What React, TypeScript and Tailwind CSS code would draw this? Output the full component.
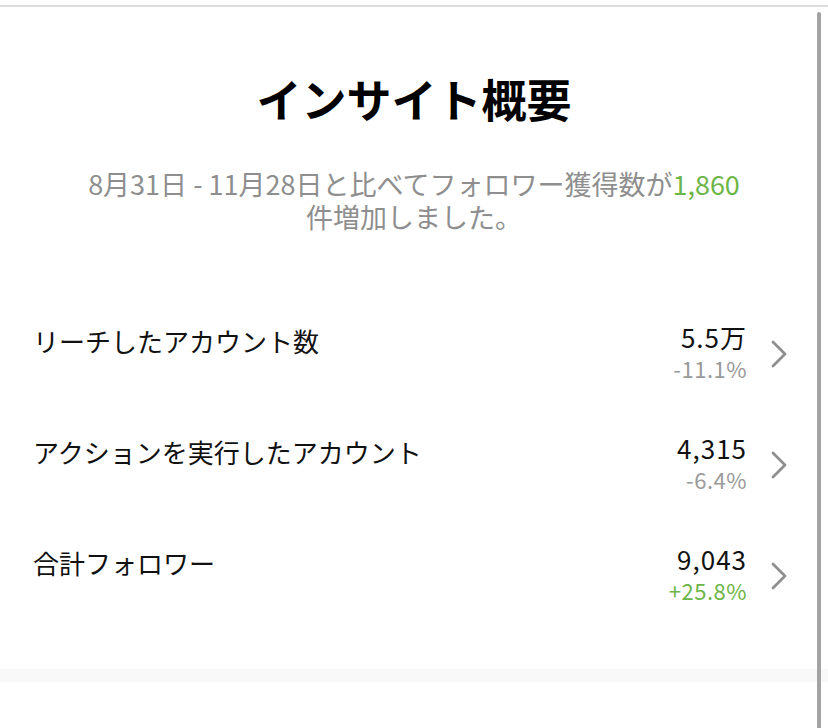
const rows = [
  { label: "リーチしたアカウント数", value: "5.5万", change: "-11.1%", up: false },
  { label: "アクションを実行したアカウント", value: "4,315", change: "-6.4%", up: false },
  { label: "合計フォロワー", value: "9,043", change: "+25.8%", up: true },
];

const Chevron = () => (
  <svg width="18" height="28" viewBox="0 0 18 28" className="ml-[24px] mt-[17px] shrink-0">
    <polyline points="3,2 15,14 3,26" fill="none" stroke="#8e8e8e" strokeWidth="2.8" strokeLinecap="round" strokeLinejoin="round" />
  </svg>
);

export default function App() {
  return (
    <div
      className="relative w-[828px] h-[728px] overflow-hidden bg-white text-[#111]"
      style={{ fontFamily: '"Noto Sans CJK JP", "Noto Sans", sans-serif' }}
    >
      <div className="h-[5px]" />
      <div className="h-[2px] bg-[#dcdcdc]" />

      {/* header */}
      <div className="flex flex-col items-center pt-[62px]">
        <h1 className="text-[45px] font-bold leading-[60px] text-black">インサイト概要</h1>
        <div className="mt-[38px] w-[700px] text-center text-[27px] leading-[33px] text-[#8e8e8e]">
          <div className="h-[33px]">
            8月31日 - 11月28日と比べてフォロワー獲得数が
            <span className="inline-block leading-[33px] text-[#6cb547]">1,860</span>
          </div>
          <div className="h-[33px]">件増加しました。</div>
        </div>
      </div>

      {/* metrics */}
      <div className="mt-[90px] flex flex-col gap-[51px] pl-[33px] pr-[40px]">
        {rows.map((r) => (
          <div key={r.label} className="flex items-start">
            <div className="flex-1 text-[26px] leading-[36px] text-[#111]">{r.label}</div>
            <div className="flex flex-col items-end -mt-[2px] -mr-[1px]">
              <div className="text-[26px] leading-[32px] tracking-[1px] text-[#111]">{r.value}</div>
              <div
                className={`text-[22px] leading-[30px] tracking-[0.5px] ${r.up ? "text-[#6cb547]" : "text-[#9a9a9a]"}`}
              >
                {r.change}
              </div>
            </div>
            <Chevron />
          </div>
        ))}
      </div>

      {/* bottom band */}
      <div className="absolute left-0 right-0 top-[669px] h-[13px] bg-[#f9f9f9]" />

      {/* scrollbar */}
      <div className="absolute right-[7px] top-[12px] bottom-0 w-[4px] rounded-t-full bg-[#a3a3a3]" />
    </div>
  );
}
